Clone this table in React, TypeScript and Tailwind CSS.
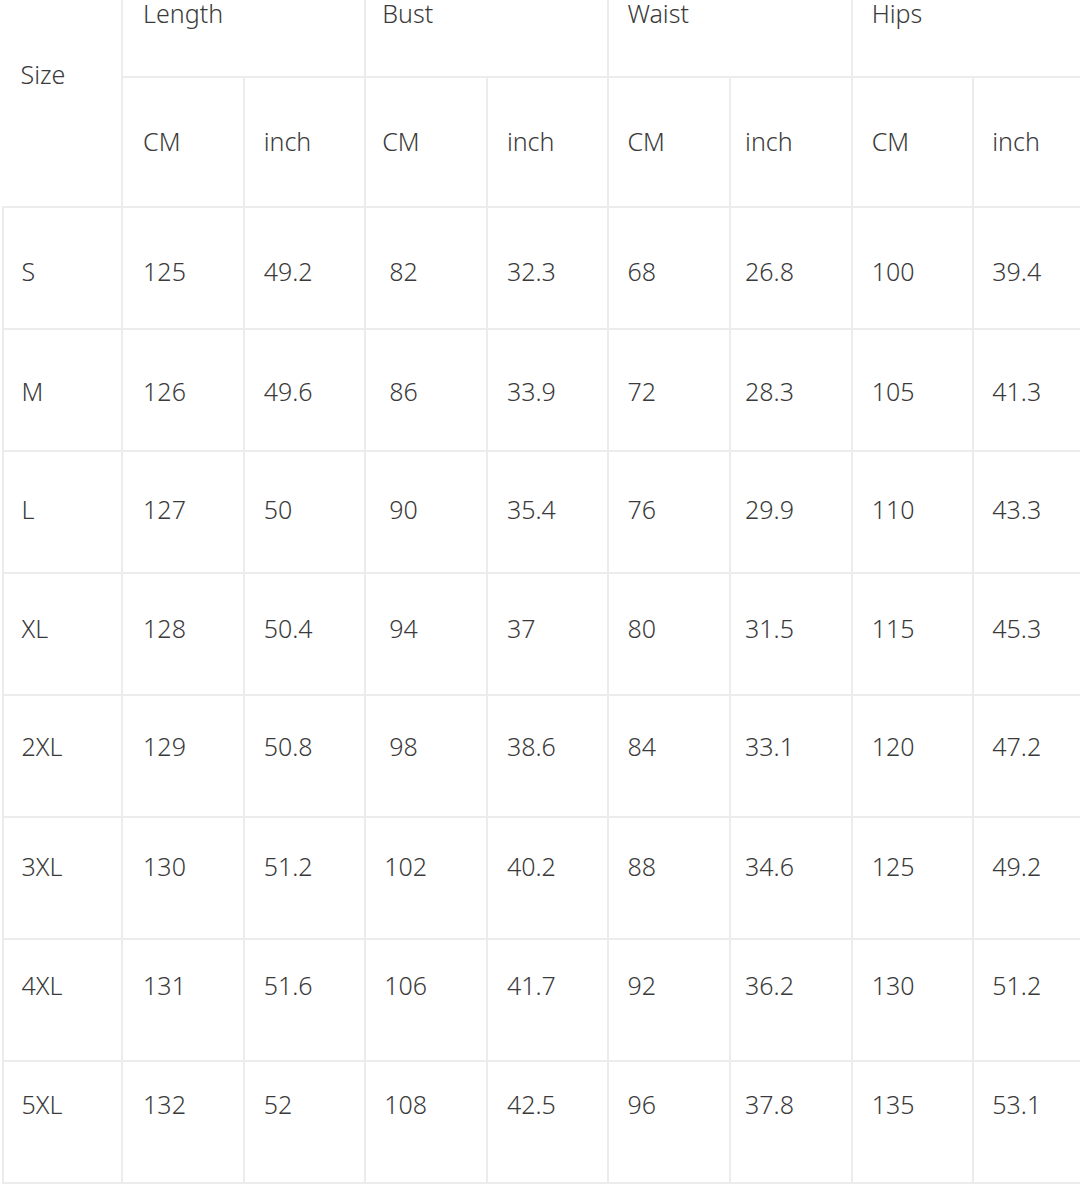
import { Fragment } from 'react'

const groups = ['Length', 'Bust', 'Waist', 'Hips']

// the text drifts up a little row by row in the source chart, hence the per-row padding
const rows: [string, string, string[]][] = [
  ['S', 'pt-[7px]', ['125', '49.2', '82', '32.3', '68', '26.8', '100', '39.4']],
  ['M', 'pt-[3px]', ['126', '49.6', '86', '33.9', '72', '28.3', '105', '41.3']],
  ['L', 'pb-[5px]', ['127', '50', '90', '35.4', '76', '29.9', '110', '43.3']],
  ['XL', 'pb-[11px]', ['128', '50.4', '94', '37', '80', '31.5', '115', '45.3']],
  ['2XL', 'pb-[19px]', ['129', '50.8', '98', '38.6', '84', '33.1', '120', '47.2']],
  ['3XL', 'pb-[23px]', ['130', '51.2', '102', '40.2', '88', '34.6', '125', '49.2']],
  ['4XL', 'pb-[29px]', ['131', '51.6', '106', '41.7', '92', '36.2', '130', '51.2']],
  ['5XL', 'pb-[35px]', ['132', '52', '108', '42.5', '96', '37.8', '135', '53.1']],
]

// left padding per value column, the source chart isn't perfectly even
const pads = ['pl-[20px]', 'pl-[19px]', 'pl-[16px]', 'pl-[19px]', 'pl-[18px]', 'pl-[14px]', 'pl-[19px]', 'pl-[18px]']
const groupPads = ['pl-[20px]', 'pl-[16px]', 'pl-[18px]', 'pl-[19px]']

const cell = 'flex items-center border-r-2 border-b-2 border-[#ececec]'

export default function App() {
  return (
    <div className="w-[1080px] h-[1187px] overflow-hidden bg-white">
      <div
        className="grid grid-cols-[repeat(9,121.6px)] grid-rows-[130px_130px_repeat(8,122px)] mt-[-52px] ml-[1.5px] text-[25px] font-[350] text-[#3a3a3a]"
        style={{ fontFamily: '"Noto Sans", "Liberation Sans", sans-serif' }}
      >
        <div className={`row-span-2 pl-[19px] pb-[4px] ${cell}`}>Size</div>
        {groups.map((g, i) => (
          <div key={g} className={`col-span-2 pt-[4px] ${groupPads[i]} ${cell}`}>{g}</div>
        ))}
        {groups.map((g, i) => (
          <Fragment key={g}>
            <div className={`${pads[i * 2]} ${cell}`}>CM</div>
            <div className={`${pads[i * 2 + 1]} ${cell}`}>inch</div>
          </Fragment>
        ))}
        {rows.map(([size, shift, vals]) => (
          <Fragment key={size}>
            <div className={`${cell} border-l-2 pl-[18px] ${shift}`}>{size}</div>
            {vals.map((v, i) => (
              <div key={i} className={`${cell} ${shift} ${i === 2 ? (v.length === 2 ? 'pl-[23px]' : 'pl-[18px]') : pads[i]}`}>{v}</div>
            ))}
          </Fragment>
        ))}
      </div>
    </div>
  )
}
